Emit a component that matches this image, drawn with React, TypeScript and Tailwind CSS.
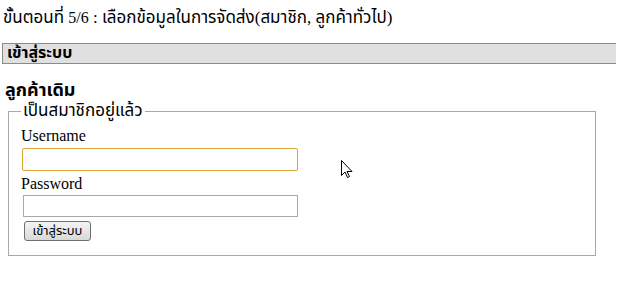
export default function App() {
  return (
    <div className="relative min-h-[283px] bg-white px-[2px] text-black">
      {/* ขั้นตอน */}
      <p className="pt-[8px] pl-[1px] text-[17px] leading-[20px] [font-family:'Liberation_Serif',Tahoma,'Noto_Sans_Thai',serif]">
        ขั้นตอนที่ <span className="text-[16px]">5/6</span> : เลือกข้อมูลในการจัดส่ง(สมาชิก, ลูกค้าทั่วไป)
      </p>

      <div className="mt-[15px] h-[21px] border-y border-l border-[#8a8a8a] bg-[#e0e0e0] pl-[4px] text-[16px] font-bold leading-[19px] [font-family:Tahoma,'Noto_Sans_Thai','DejaVu_Sans',sans-serif]">
        เข้าสู่ระบบ
      </div>

      <h2 className="mt-[17px] pl-[3px] text-[18px] font-bold leading-[20px] [font-family:Tahoma,'Noto_Sans_Thai','DejaVu_Sans',sans-serif]">
        ลูกค้าเดิม
      </h2>

      <fieldset className="ml-[6px] w-[588px] border border-[#a8a8a8] pt-[1px] pr-[12px] pb-[14px] pl-[12px]">
        <legend className="px-[2px] text-[17px] leading-[20px] [font-family:Tahoma,'Noto_Sans_Thai','DejaVu_Sans',sans-serif]">
          เป็นสมาชิกอยู่แล้ว
        </legend>
        <LoginForm />
      </fieldset>

      {/* เคอร์เซอร์เมาส์ */}
      <svg
        className="absolute left-[341px] top-[160px]"
        width="12"
        height="19"
        viewBox="0 0 12 19"
      >
        <path
          d="M0.5 0.5 L0.5 15.5 L4 12 L6.5 17.5 L8.5 16.5 L6 11.5 L11 11.5 Z"
          fill="#fff"
          stroke="#000"
          strokeWidth="1"
          strokeLinejoin="miter"
        />
      </svg>
    </div>
  );
}

function LoginForm() {
  return (
    <div className="flex flex-col items-start [font-family:'Liberation_Serif',serif]">
      <label className="mt-[4px] text-[16px] leading-[20px]">Username</label>
      <input
        type="text"
        className="mt-[2px] ml-[1px] h-[23px] w-[276px] rounded-[2px] border border-[#e0a53a] bg-white outline-none"
      />
      <label className="mt-[3px] text-[16px] leading-[20px]">Password</label>
      <input
        type="password"
        className="mt-[1px] ml-[2px] h-[22px] w-[275px] border border-[#a9a9a9] bg-white outline-none"
      />
      <button className="mt-[4px] ml-[3px] h-[20px] w-[67px] rounded-[3px] border border-[#707070] bg-gradient-to-b from-[#f4f4f4] to-[#d8d8d8] text-[13px] leading-[18px] [font-family:Tahoma,'Noto_Sans_Thai','DejaVu_Sans',sans-serif]">
        เข้าสู่ระบบ
      </button>
    </div>
  );
}
